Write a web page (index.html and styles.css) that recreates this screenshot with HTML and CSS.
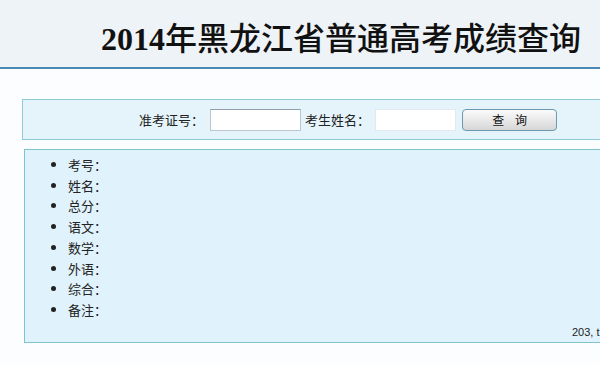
FILE: index.html
```html
<!DOCTYPE html>
<html lang="zh-CN">

<head>
    <meta charset="UTF-8">
    <meta name="viewport" content="width=device-width, initial-scale=1.0">
    <title>2014年黑龙江省普通高考成绩查询</title>

    <link rel="stylesheet" href="styles.css">
</head>

<body>
    <div class="header">
        <h1 class="title"><span class="year">2014</span>年黑龙江省普通高考成绩查询</h1>
    </div>

    <div class="search">
        <label>准考证号：</label>
        <input class="ipt ipt-no" type="text">
        <label>考生姓名：</label>
        <input class="ipt ipt-name" type="text">
        <button class="btn">查&nbsp;&nbsp;&nbsp;&nbsp;询</button>
    </div>

    <div class="result">
        <ul class="list">
            <li>考号：</li>
            <li>姓名：</li>
            <li>总分：</li>
            <li>语文：</li>
            <li>数学：</li>
            <li>外语：</li>
            <li>综合：</li>
            <li>备注：</li>
        </ul>
        <div class="foot">203, t</div>
    </div>
</body>

</html>
```

FILE: styles.css
```css
* {
    margin: 0;
    padding: 0;
    box-sizing: border-box;
}

body {
    background: #fbfdfe;
    font-family: "Noto Sans CJK SC", sans-serif;
    font-size: 13px;
    color: #222;
    overflow: hidden;
}

.header {
    height: 69px;
    background: #eef3f7;
    border-bottom: 2px solid #4a88b5;
}

.header .title {
    padding-left: 101px;
    padding-top: 16px;
    font-family: "Noto Sans CJK SC", serif;
    font-size: 32px;
    font-weight: 500;
    line-height: 40px;
    color: #111;
    white-space: nowrap;
}

.header .year {
    font-family: "Liberation Serif", serif;
    font-weight: bold;
}

.search {
    display: flex;
    align-items: center;
    width: 600px;
    height: 41px;
    margin: 30px 0 0 22px;
    padding-left: 116px;
    background: #e5f4fb;
    border: 1px solid #8ecbd9;
}

.search label {
    line-height: 22px;
    white-space: nowrap;
}

.ipt {
    height: 22px;
    margin: 0 4px 0 6px;
    border: 1px solid #b9c7d3;
    border-top-color: #8e9eab;
    background: #fff;
}

.ipt-no {
    width: 91px;
}

.ipt-name {
    width: 81px;
    margin-left: 5px;
    border-color: #e3eaef;
}

.btn {
    width: 95px;
    height: 22px;
    margin-left: 2px;
    border: 1px solid #6b98b3;
    border-radius: 4px;
    background: linear-gradient(#fbfbfb, #e9e9e9 50%, #d6d6d6);
    font-family: "Noto Sans CJK SC", sans-serif;
    font-size: 12px;
    color: #111;
}

.result {
    width: 600px;
    height: 194px;
    margin: 9px 0 0 24px;
    background: #e0f2fc;
    border: 1px solid #7fc3cf;
}

.list {
    padding: 5px 0 0 43px;
    list-style: disc;
}

.list li {
    line-height: 20.7px;
}

.foot {
    padding: 5px 0 0 547px;
    font-family: "Liberation Sans", sans-serif;
    font-size: 11px;
    white-space: nowrap;
}
```
